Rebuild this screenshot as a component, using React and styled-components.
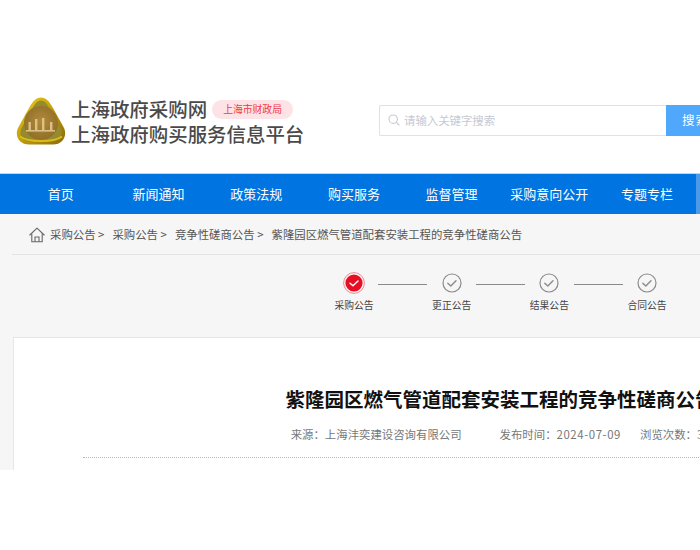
import React from "react";
import styled, { createGlobalStyle } from "styled-components";

const Global = createGlobalStyle`
  html, body { margin: 0; padding: 0; background: #fff; overflow: hidden; width: 700px; height: 550px; }
  * { box-sizing: border-box; }
  body { font-family: "Noto Sans CJK SC", "Liberation Sans", sans-serif; }
`;

const Page = styled.div`
  width: 700px;
  height: 550px;
  overflow: hidden;
  background: #fff;
`;

const Header = styled.header`
  height: 173px;
  display: flex;
  align-items: flex-start;
  padding: 95px 0 0 16px;
  width: 1100px;
`;

const Brand = styled.div`
  width: 363px;
  flex: none;
  display: flex;
  align-items: center;
  gap: 5px;
`;

const LogoBox = styled.span`
  display: inline-flex;
  flex: none;
  filter: blur(0.4px);
`;

const BrandText = styled.div`
  display: flex;
  flex-direction: column;
  color: #4a4a4a;
  font-size: 19.45px;
  font-weight: 500;
  line-height: 24.5px;
  margin-top: 2px;
`;

const BrandLine = styled.div`
  display: flex;
  align-items: center;
  gap: 5px;
  white-space: nowrap;
`;

const Badge = styled.span`
  display: inline-flex;
  align-items: center;
  justify-content: center;
  width: 81px;
  height: 19px;
  border-radius: 10px;
  background: #fde3e6;
  color: #f0394c;
  font-size: 9.8px;
  font-weight: 400;
  line-height: 19px;
`;

const Search = styled.form`
  display: flex;
  margin: 10px 0 0;
  height: 30px;
  flex: none;
`;

const SearchField = styled.div`
  width: 287px;
  height: 31px;
  display: flex;
  align-items: center;
  gap: 4px;
  padding: 0 0 2px 8px;
  border: 1px solid #dfe1ea;
  border-right: 0;
  background: #fff;
  color: #c6c9d3;
  font-size: 11.4px;
  border-radius: 2px 0 0 2px;
`;

const SearchButton = styled.div`
  width: 66px;
  height: 31px;
  background: #4fa8fb;
  color: #fff;
  font-size: 12.5px;
  line-height: 30px;
  padding-left: 16px;
  letter-spacing: 1px;
`;

const Nav = styled.nav`
  height: 41px;
  width: 900px;
  display: flex;
  padding-left: 12px;
  background: #0074e0;
  border-top: 1px solid #b9d8f5;
`;

const NavItem = styled.div`
  flex: 0 0 97.7px;
  text-align: center;
  color: #fff;
  font-size: 13px;
  line-height: 39px;
`;

const NavAccent = styled.div`
  flex: 0 0 97.6px;
  background: #4b9be8;
`;

const Main = styled.main`
  height: 256px;
  background: #f6f6f6;
  overflow: hidden;
  width: 1100px;
`;

const Crumbs = styled.div`
  height: 41px;
  margin-left: 12px;
  padding-left: 17px;
  display: flex;
  align-items: center;
  color: #555;
  font-size: 11.4px;
  border-bottom: 1px solid #e4e4e4;
  white-space: nowrap;
`;

const HomeWrap = styled.span`
  display: inline-flex;
  margin-right: 5px;
  margin-top: 1px;
`;

const Crumb = styled.span`
  margin-right: ${(p) => (p.$tail ? 0 : "8px")};
`;

const Steps = styled.div`
  display: flex;
  align-items: flex-start;
  padding: 17px 0 0 334px;
  height: 82px;
`;

const Step = styled.div`
  flex: 0 0 40px;
  display: flex;
  flex-direction: column;
  align-items: center;
`;

const StepIcon = styled.div`
  width: 22px;
  height: 22px;
  display: flex;
  align-items: center;
  justify-content: center;
`;

const StepLabel = styled.div`
  margin-top: 5px;
  font-size: 9.8px;
  line-height: 12px;
  color: #444;
  white-space: nowrap;
`;

const Connector = styled.div`
  flex: 0 0 49px;
  height: 1px;
  margin: 12px 4.35px 0;
  background: #8a8a8a;
`;

const Card = styled.section`
  margin-left: 13px;
  width: 974px;
  height: 300px;
  background: #fff;
  border: 1px solid #e6e6e6;
  padding-top: 46px;
`;

const Title = styled.h1`
  margin: 0;
  text-align: center;
  font-size: 19.5px;
  line-height: 30px;
  font-weight: 700;
  color: #111;
  white-space: nowrap;
`;

const Meta = styled.div`
  display: flex;
  justify-content: center;
  margin-top: 10px;
  padding-right: 6px;
  font-size: 11.4px;
  line-height: 20px;
  color: #777;
  white-space: nowrap;
`;

const MetaItem = styled.span`
  margin-right: ${(p) => p.$gap}px;
`;

const MetaDate = styled.span`
  letter-spacing: 0.6px;
`;

const Rule = styled.div`
  margin: 13px 69px 0;
  border-top: 1px dotted #b5b5b5;
`;

const Logo = () => (
  <svg width="50" height="48" viewBox="0 0 50 48" aria-hidden="true">
    <defs>
      <linearGradient id="gold" x1="0" y1="0" x2="1" y2="1">
        <stop offset="0" stopColor="#efd21c" />
        <stop offset="0.5" stopColor="#c29c0c" />
        <stop offset="1" stopColor="#8a6a08" />
      </linearGradient>
      <radialGradient id="core" cx="0.5" cy="0.45" r="0.6">
        <stop offset="0" stopColor="#b08a3c" />
        <stop offset="1" stopColor="#8f6c26" />
      </radialGradient>
    </defs>
    <path d="M25 0.5C30 0.5 33 4 37 11L47.5 30C52 38 47 47.5 37 47.5H13C3 47.5 -2 38 2.5 30L13 11C17 4 20 0.5 25 0.5Z" fill="url(#gold)" />
    <path d="M25 3.5C29 3.5 31 7 35 13.5L44.5 31C47.5 37 44 44.5 36 44.5H14C6 44.5 2.5 37 5.5 31L15 13.5C19 7 21 3.5 25 3.5Z" fill="#958a2c" />
    <circle cx="25" cy="26" r="17" fill="url(#core)" />
    <g fill="#dcc184">
      <rect x="12.5" y="25" width="2.4" height="9" />
      <rect x="19" y="22" width="2.4" height="12" />
      <rect x="26" y="21" width="2.4" height="13" />
      <rect x="34" y="25" width="2.4" height="9" />
      <rect x="10" y="33" width="29" height="1.6" />
    </g>
    <path d="M4 39.5C12 45.5 38 45.5 46 39.5" fill="none" stroke="#dcbc18" strokeWidth="2" />
  </svg>
);

const SearchIcon = () => (
  <svg width="12" height="12" viewBox="0 0 12 12" fill="none" stroke="#c6c9d3" strokeWidth="1.1" aria-hidden="true">
    <circle cx="5.2" cy="5.2" r="4.2" />
    <path d="M8.4 8.4L11 11" strokeLinecap="round" />
  </svg>
);

const HomeIcon = () => (
  <svg width="16" height="16" viewBox="0 0 16 16" fill="none" stroke="#666" strokeWidth="1.1" aria-hidden="true">
    <path d="M0.8 8L8 1.2L15.2 8" strokeLinejoin="round" strokeLinecap="round" />
    <path d="M2.8 6.6V14.8H13.2V6.6" />
    <path d="M6 14.8V10H10V14.8" />
  </svg>
);

const StepDone = () => (
  <svg width="20" height="20" viewBox="0 0 20 20" fill="none" aria-hidden="true">
    <circle cx="10" cy="10" r="9" stroke="#8b8b8b" strokeWidth="1.2" />
    <path d="M5.8 10.2L8.8 13L14 7.8" stroke="#8b8b8b" strokeWidth="1.4" strokeLinecap="round" strokeLinejoin="round" />
  </svg>
);

const StepActive = () => (
  <svg width="22" height="22" viewBox="0 0 22 22" fill="none" aria-hidden="true">
    <circle cx="11" cy="11" r="10.4" stroke="#f28a96" strokeWidth="1" />
    <circle cx="11" cy="11" r="8.6" fill="#e60f23" />
    <path d="M7 11.2L10 13.8L15 9" stroke="#fff" strokeWidth="1.5" strokeLinecap="round" strokeLinejoin="round" />
  </svg>
);

const navItems = ["首页", "新闻通知", "政策法规", "购买服务", "监督管理", "采购意向公开", "专题专栏"];
const crumbs = ["采购公告 >", "采购公告 >", "竞争性磋商公告 >"];
const steps = ["采购公告", "更正公告", "结果公告", "合同公告"];

export default function App() {
  return (
    <Page>
      <Global />
      <Header>
        <Brand>
          <LogoBox>
            <Logo />
          </LogoBox>
          <BrandText>
            <BrandLine>
              上海政府采购网
              <Badge>上海市财政局</Badge>
            </BrandLine>
            <BrandLine>上海政府购买服务信息平台</BrandLine>
          </BrandText>
        </Brand>
        <Search>
          <SearchField>
            <SearchIcon />
            请输入关键字搜索
          </SearchField>
          <SearchButton>搜索</SearchButton>
        </Search>
      </Header>
      <Nav>
        {navItems.map((n) => (
          <NavItem key={n}>{n}</NavItem>
        ))}
        <NavAccent />
      </Nav>
      <Main>
        <Crumbs>
          <HomeWrap>
            <HomeIcon />
          </HomeWrap>
          {crumbs.map((c, i) => (
            <Crumb key={i}>{c}</Crumb>
          ))}
          <Crumb $tail>紫隆园区燃气管道配套安装工程的竞争性磋商公告</Crumb>
        </Crumbs>
        <Steps>
          {steps.map((s, i) => (
            <React.Fragment key={s}>
              {i > 0 && <Connector />}
              <Step>
                <StepIcon>{i === 0 ? <StepActive /> : <StepDone />}</StepIcon>
                <StepLabel>{s}</StepLabel>
              </Step>
            </React.Fragment>
          ))}
        </Steps>
        <Card>
          <Title>紫隆园区燃气管道配套安装工程的竞争性磋商公告</Title>
          <Meta>
            <MetaItem $gap={38}>来源：上海沣奕建设咨询有限公司</MetaItem>
            <MetaItem $gap={19}>
              发布时间：<MetaDate>2024-07-09</MetaDate>
            </MetaItem>
            <MetaItem $gap={0}>浏览次数：3</MetaItem>
          </Meta>
          <Rule />
        </Card>
      </Main>
    </Page>
  );
}
